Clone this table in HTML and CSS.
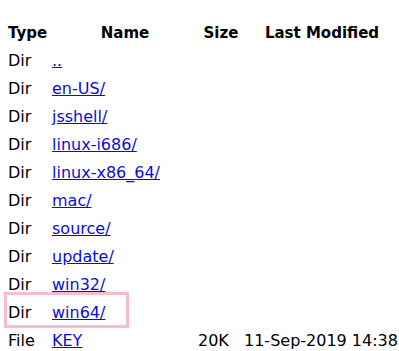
FILE: index.html
```html
<!DOCTYPE html>
<html>
<head>
<meta charset="utf-8">
<title>Index</title>
<link rel="stylesheet" href="styles.css">
</head>
<body>
<div class="listing">
  <div class="row head">
    <span class="c-type">Type</span>
    <span class="c-name">Name</span>
    <span class="c-size">Size</span>
    <span class="c-mod">Last Modified</span>
  </div>
  <div class="row"><span class="c-type">Dir</span><span class="c-name"><a href="#">..</a></span><span class="c-size"></span><span class="c-mod"></span></div>
  <div class="row"><span class="c-type">Dir</span><span class="c-name"><a href="#">en-US/</a></span><span class="c-size"></span><span class="c-mod"></span></div>
  <div class="row"><span class="c-type">Dir</span><span class="c-name"><a href="#">jsshell/</a></span><span class="c-size"></span><span class="c-mod"></span></div>
  <div class="row"><span class="c-type">Dir</span><span class="c-name"><a href="#">linux-i686/</a></span><span class="c-size"></span><span class="c-mod"></span></div>
  <div class="row"><span class="c-type">Dir</span><span class="c-name"><a href="#">linux-x86_64/</a></span><span class="c-size"></span><span class="c-mod"></span></div>
  <div class="row"><span class="c-type">Dir</span><span class="c-name"><a href="#">mac/</a></span><span class="c-size"></span><span class="c-mod"></span></div>
  <div class="row"><span class="c-type">Dir</span><span class="c-name"><a href="#">source/</a></span><span class="c-size"></span><span class="c-mod"></span></div>
  <div class="row"><span class="c-type">Dir</span><span class="c-name"><a href="#">update/</a></span><span class="c-size"></span><span class="c-mod"></span></div>
  <div class="row"><span class="c-type">Dir</span><span class="c-name"><a href="#">win32/</a></span><span class="c-size"></span><span class="c-mod"></span></div>
  <div class="row marked"><span class="c-type">Dir</span><span class="c-name"><a href="#">win64/</a></span><span class="c-size"></span><span class="c-mod"></span></div>
  <div class="row"><span class="c-type">File</span><span class="c-name"><a href="#">KEY</a></span><span class="c-size">20K</span><span class="c-mod">11-Sep-2019 14:38</span></div>
</div>
</body>
</html>
```

FILE: styles.css
```css
html, body {
  margin: 0;
  padding: 0;
  background: #ffffff;
}

body {
  padding: 8px;
  font-family: "DejaVu Sans", Verdana, sans-serif;
  font-size: 16px;
  color: #000000;
  overflow: hidden;
}

.listing {
  padding-top: 11px;
}

.row {
  display: grid;
  grid-template-columns: 44px 146px 46px 160px;
  height: 28px;
  line-height: 28px;
  white-space: nowrap;
}

.row.marked {
  position: relative;
}

.row.marked::after {
  content: "";
  position: absolute;
  left: -4px;
  top: -7px;
  width: 125px;
  height: 36px;
  box-sizing: border-box;
  border: 3px solid #f5bcd0;
  pointer-events: none;
}

.head {
  font-weight: bold;
  font-size: 15px;
}

.head .c-name,
.head .c-size,
.head .c-mod {
  text-align: center;
}

.head .c-mod {
  padding-right: 4px;
}

.c-type {
  text-align: left;
}

.c-name a {
  color: #0c0cd8;
  text-decoration: underline;
}
```
